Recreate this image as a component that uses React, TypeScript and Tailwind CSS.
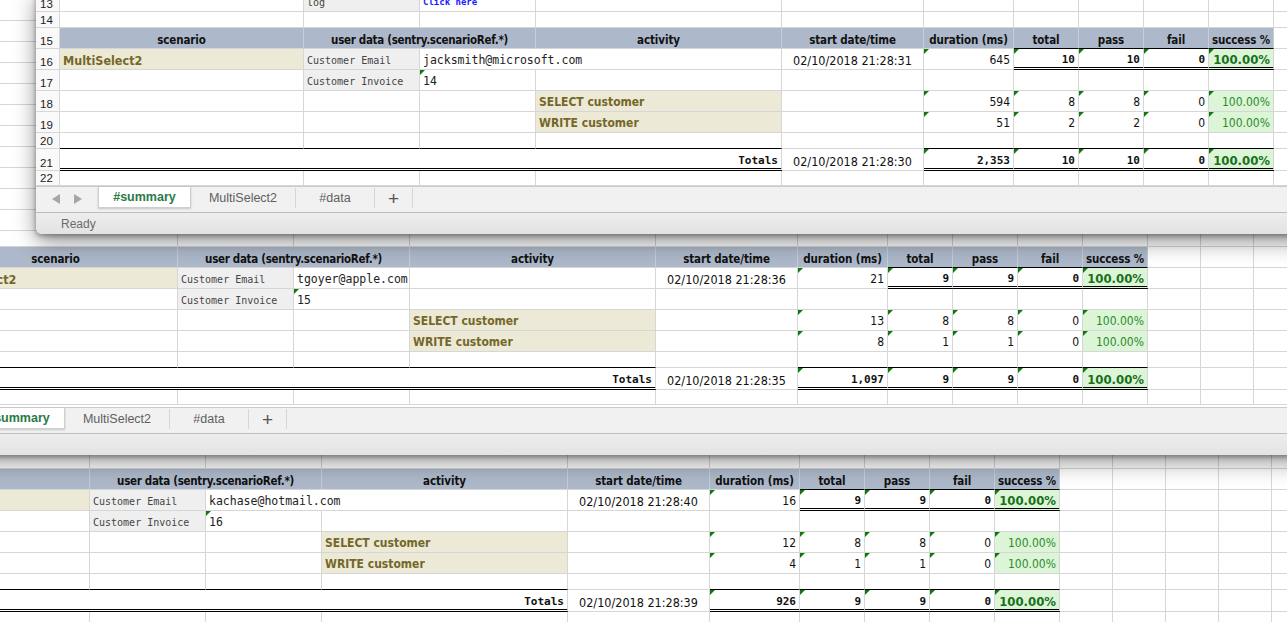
import React from "react";

type Cell = {
  t?: React.ReactNode;
  k?: string;
  span?: 2 | 4;
  tri?: boolean;
  noR?: boolean;
  bb?: "black" | "double";
};

type Row = { n: number; h: string; cells: Cell[] };

type Run = {
  email: string;
  emailFits?: boolean;
  inv: string;
  start: string;
  dur: string;
  total: string;
  pass: string;
  fail: string;
  sel: string[];
  wr: string[];
  tStart: string;
  tDur: string;
};

const MONO = "font-['DejaVu_Sans_Mono',monospace]";
const COND = "font-['DejaVu_Sans_Condensed','DejaVu_Sans',sans-serif] [font-stretch:condensed]";

const HEAD = `justify-center bg-[#adb9ca] border-r-[#c5cdd8] !pb-[1px] font-bold text-[11.5px] tracking-[-0.1px] text-[#111] ${COND}`;
const HEADU = `justify-center bg-[#adb9ca] border-r-[#c5cdd8] !pb-[1px] font-bold text-[11.5px] tracking-[-0.3px] text-[#111] ${COND}`;
const NAME = `bg-[#ecead6] font-bold text-[12.5px] text-[#75672a] ${COND}`;
const NAME2 = `bg-[#ecead6] font-bold text-[12px] text-[#75672a] ${COND}`;
const LABEL = `bg-[#efefef] text-[10px] text-[#444] ${MONO}`;
const LINK = `font-bold text-[9px] text-[#1a1aff] ${MONO}`;
const EMAIL = `text-[11.5px] text-[#222] ${MONO}`;
const DATE = `justify-center text-[12.5px] text-[#111] ${COND}`;
const NUM = `justify-end text-[12px] text-[#111] ${COND}`;
const BNUM = `justify-end font-bold text-[11px] text-[#111] ${MONO}`;
const PCT = `justify-end bg-[#dcf5d7] text-[12px] text-[#2c8a2c] ${COND}`;
const PCTB = `justify-end bg-[#dcf5d7] font-bold text-[13px] text-[#17701b] ${COND}`;

const GRID =
  "grid grid-cols-[24px_244px_116px_116px_246px_142px_90px_65px_65px_65px_65px_53px_53px_53px_53px_53px_53px_53px]";

const empty = (count: number): Cell[] => Array.from({ length: count }, () => ({}));

function buildRows(run: Run, from: number, to: number): Row[] {
  const rows: Row[] = [];
  for (let n = from; n <= to; n++) {
    let h = "h-[21px]";
    let cells: Cell[] = empty(10);
    if (n === 13) {
      cells = [{}, { t: "log", k: LABEL }, { t: "Click here", k: LINK }, ...empty(7)];
    } else if (n === 14) {
      h = "h-[16px]";
    } else if (n === 15) {
      cells = [
        { t: "scenario", k: HEAD },
        { t: "user data (sentry.scenarioRef.*)", k: HEADU, span: 2 },
        { t: "activity", k: HEAD },
        { t: "start date/time", k: HEAD },
        { t: "duration (ms)", k: HEAD },
        { t: "total", k: HEAD, bb: "black" },
        { t: "pass", k: HEAD, bb: "black" },
        { t: "fail", k: HEAD, bb: "black" },
        { t: "success %", k: HEAD, bb: "black" },
      ];
    } else if (n === 16) {
      cells = [
        { t: "MultiSelect2", k: NAME },
        { t: "Customer Email", k: LABEL },
        { t: run.email, k: EMAIL, noR: !run.emailFits },
        {},
        { t: run.start, k: DATE },
        { t: run.dur, k: NUM, tri: true },
        { t: run.total, k: BNUM, tri: true, bb: "double" },
        { t: run.pass, k: BNUM, tri: true, bb: "double" },
        { t: run.fail, k: BNUM, tri: true, bb: "double" },
        { t: "100.00%", k: PCTB, tri: true, bb: "double" },
      ];
    } else if (n === 17) {
      cells = [{}, { t: "Customer Invoice", k: LABEL }, { t: run.inv, k: EMAIL, tri: true }, ...empty(7)];
    } else if (n === 18 || n === 19) {
      const v = n === 18 ? run.sel : run.wr;
      cells = [
        {},
        {},
        {},
        { t: n === 18 ? "SELECT customer" : "WRITE customer", k: NAME2 },
        {},
        { t: v[0], k: NUM, tri: true },
        { t: v[1], k: NUM, tri: true },
        { t: v[2], k: NUM, tri: true },
        { t: v[3], k: NUM, tri: true },
        { t: "100.00%", k: PCT, tri: true },
      ];
    } else if (n === 20) {
      h = "h-[16px]";
      cells = [
        { bb: "black" },
        { bb: "black" },
        { bb: "black" },
        { bb: "black" },
        {},
        { bb: "black" },
        { bb: "black" },
        { bb: "black" },
        { bb: "black" },
        { bb: "black" },
      ];
    } else if (n === 21) {
      h = "h-[22px]";
      cells = [
        { t: "Totals", k: BNUM, span: 4, bb: "double" },
        { t: run.tStart, k: DATE },
        { t: run.tDur, k: BNUM, tri: true, bb: "double" },
        { t: run.total, k: BNUM, tri: true, bb: "double" },
        { t: run.pass, k: BNUM, tri: true, bb: "double" },
        { t: run.fail, k: BNUM, tri: true, bb: "double" },
        { t: "100.00%", k: PCTB, tri: true, bb: "double" },
      ];
    } else if (n === 22) {
      h = "h-[15px]";
    }
    rows.push({ n, h, cells: [...cells, ...empty(7)] });
  }
  return rows;
}

function SheetCell({ c }: { c: Cell }) {
  return (
    <div
      className={[
        "relative flex min-w-0 items-end whitespace-nowrap px-[3px] leading-[13px] border-b border-[#d6d6d6]",
        c.noR ? "" : "border-r",
        c.span === 2 ? "col-span-2" : "",
        c.span === 4 ? "col-span-4" : "",
        c.bb === "black" ? "border-b-black pb-[2px]" : "",
        c.bb === "double" ? "border-double border-b-[3px] border-b-black pb-[1px]" : "",
        c.bb ? "" : "pb-[2px]",
        c.k ?? "",
      ].join(" ")}
    >
      {c.tri && (
        <span className="absolute left-0 top-0 h-0 w-0 border-r-[5px] border-t-[5px] border-r-transparent border-t-[#11780f]" />
      )}
      {c.t}
    </div>
  );
}

function Sheet({ rows }: { rows: Row[] }) {
  return (
    <div className="flex flex-col">
      {rows.map((row) => (
        <div key={row.n} className={`${GRID} ${row.h} shrink-0`}>
          <div className="flex items-end border-b border-r border-[#d6d6d6] bg-[#f9f9f9] pb-[1px] pl-[4px] font-['Liberation_Sans',Arial,sans-serif] text-[11.5px] leading-[12px] text-[#222]">
            {row.n}
          </div>
          {row.cells.map((c, i) => (
            <SheetCell key={i} c={c} />
          ))}
        </div>
      ))}
    </div>
  );
}

function TabBar() {
  return (
    <div className="flex h-[26px] shrink-0 items-stretch border-t border-[#cacaca] bg-[#f1f1f1] font-['Liberation_Sans',Arial,sans-serif] text-[12.5px]">
      <div className="flex w-[62px] items-center gap-[14px] pb-[2px] pl-[16px]">
        <span className="h-0 w-0 border-y-[5px] border-r-[8px] border-y-transparent border-r-[#a6a6a6]" />
        <span className="h-0 w-0 border-y-[5px] border-l-[8px] border-y-transparent border-l-[#a6a6a6]" />
      </div>
      <div className="mb-[4px] flex w-[93px] items-center justify-center border-x border-b border-[#cfcfcf] bg-white font-bold text-[#2a7a47] shadow-[0_1px_2px_rgba(0,0,0,0.18)]">
        #summary
      </div>
      <div className="mb-[4px] mt-[1px] flex w-[105px] items-center justify-center border-r border-[#d6d6d6] text-[#606060]">
        MultiSelect2
      </div>
      <div className="mb-[4px] mt-[1px] flex w-[79px] items-center justify-center border-r border-[#d6d6d6] text-[#606060]">
        #data
      </div>
      <div className="mb-[4px] mt-[1px] flex w-[38px] items-center justify-center border-r border-[#d6d6d6] text-[19px] font-light leading-none text-[#555]">
        +
      </div>
    </div>
  );
}

function StatusBar() {
  return (
    <div className="flex h-[22px] shrink-0 items-center border-t border-[#bdbdbd] bg-linear-to-b from-[#ededed] to-[#e3e3e3] pl-[25px] font-['Liberation_Sans',Arial,sans-serif] text-[12px] text-[#6b6b6b]">
      Ready
    </div>
  );
}

const RUNS: Run[] = [
  {
    email: "jacksmith@microsoft.com",
    inv: "14",
    start: "02/10/2018 21:28:31",
    dur: "645",
    total: "10",
    pass: "10",
    fail: "0",
    sel: ["594", "8", "8", "0"],
    wr: ["51", "2", "2", "0"],
    tStart: "02/10/2018 21:28:30",
    tDur: "2,353",
  },
  {
    email: "tgoyer@apple.com",
    emailFits: true,
    inv: "15",
    start: "02/10/2018 21:28:36",
    dur: "21",
    total: "9",
    pass: "9",
    fail: "0",
    sel: ["13", "8", "8", "0"],
    wr: ["8", "1", "1", "0"],
    tStart: "02/10/2018 21:28:35",
    tDur: "1,097",
  },
  {
    email: "kachase@hotmail.com",
    inv: "16",
    start: "02/10/2018 21:28:40",
    dur: "16",
    total: "9",
    pass: "9",
    fail: "0",
    sel: ["12", "8", "8", "0"],
    wr: ["4", "1", "1", "0"],
    tStart: "02/10/2018 21:28:39",
    tDur: "926",
  },
];

export default function App() {
  return (
    <div className="relative h-[622px] w-[1287px] overflow-hidden bg-white">
      {/* back window */}
      <div className="absolute left-[-178px] top-[432px] w-[1700px] overflow-hidden bg-white">
        <Sheet rows={buildRows(RUNS[2], 13, 22)} />
      </div>

      {/* middle window */}
      <div className="absolute left-[-90px] top-[-21px] flex w-[1700px] flex-col overflow-hidden rounded-b-[6px] bg-white shadow-[0_2px_5px_rgba(0,0,0,0.35),0_8px_22px_rgba(0,0,0,0.38)]">
        <div className="h-[428px] overflow-hidden">
          <Sheet rows={buildRows(RUNS[1], 2, 22)} />
        </div>
        <TabBar />
        <StatusBar />
      </div>

      {/* front window */}
      <div className="absolute left-[36px] top-[-9px] flex w-[1700px] flex-col overflow-hidden rounded-b-[6px] bg-white shadow-[0_2px_5px_rgba(0,0,0,0.35),0_8px_22px_rgba(0,0,0,0.42)]">
        <div className="h-[195px] overflow-hidden">
          <Sheet rows={buildRows(RUNS[0], 13, 22)} />
        </div>
        <TabBar />
        <StatusBar />
      </div>
    </div>
  );
}
